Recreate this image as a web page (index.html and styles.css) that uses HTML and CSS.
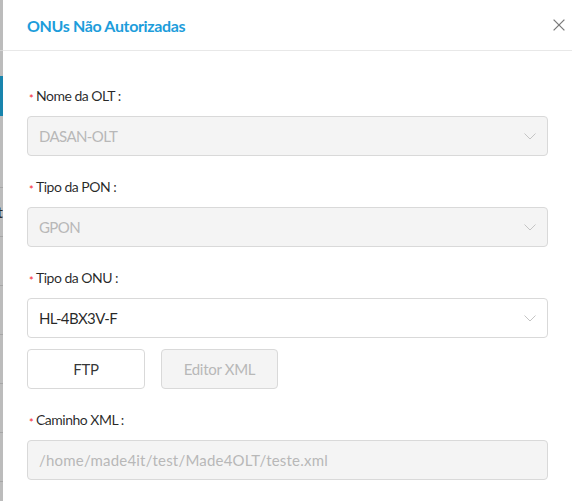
FILE: index.html
```html
<!DOCTYPE html>
<html lang="pt">
<head>
<meta charset="utf-8">
<title>ONUs Não Autorizadas</title>
<link rel="stylesheet" href="styles.css">
</head>
<body>
<div class="page">
  <div class="backdrop">
    <div class="bd-head"></div>
    <div class="bd-space"></div>
    <div class="bd-active"></div>
    <div class="bd-menu"></div>
    <div class="bd-row"><span>t</span></div>
    <div class="bd-row"></div>
    <div class="bd-row"></div>
    <div class="bd-row"></div>
    <div class="bd-row"></div>
    <div class="bd-row"></div>
    <div class="bd-row"></div>
  </div>
  <aside class="drawer">
    <header class="drawer-header">
      <h1 class="drawer-title">ONUs Não Autorizadas</h1>
      <button class="close" aria-label="Fechar">
        <svg width="12" height="12" viewBox="0 0 12 12"><path d="M0.6 0.6 L11.4 11.4 M11.4 0.6 L0.6 11.4" stroke="#7a7a7a" stroke-width="1.3" fill="none"/></svg>
      </button>
    </header>
    <div class="drawer-body">
      <div class="item">
        <label class="label"><span class="req">*</span>Nome da OLT :</label>
        <div class="select disabled"><span class="value">DASAN-OLT</span>
          <svg class="arrow" width="12" height="7" viewBox="0 0 12 7"><path d="M0.5 0.5 L6 6 L11.5 0.5" stroke="#c4c4c4" stroke-width="1" fill="none"/></svg>
        </div>
      </div>
      <div class="item">
        <label class="label"><span class="req">*</span>Tipo da PON :</label>
        <div class="select disabled"><span class="value">GPON</span>
          <svg class="arrow" width="12" height="7" viewBox="0 0 12 7"><path d="M0.5 0.5 L6 6 L11.5 0.5" stroke="#c4c4c4" stroke-width="1" fill="none"/></svg>
        </div>
      </div>
      <div class="item">
        <label class="label"><span class="req">*</span>Tipo da ONU :</label>
        <div class="select"><span class="value">HL-4BX3V-F</span>
          <svg class="arrow" width="12" height="7" viewBox="0 0 12 7"><path d="M0.5 0.5 L6 6 L11.5 0.5" stroke="#c4c4c4" stroke-width="1" fill="none"/></svg>
        </div>
      </div>
      <div class="item buttons">
        <button class="btn">FTP</button>
        <button class="btn disabled">Editor XML</button>
      </div>
      <div class="item">
        <label class="label"><span class="req">*</span>Caminho XML :</label>
        <div class="select disabled"><span class="value path">/home/made4it/test/Made4OLT/teste.xml</span></div>
      </div>
    </div>
  </aside>
</div>
</body>
</html>
```
FILE: styles.css
```css
* { box-sizing: border-box; }
body {
  margin: 0;
  font-family: Lato, "Noto Sans", sans-serif;
  color: rgba(0, 0, 0, 0.85);
  background: #fff;
}
.page {
  display: flex;
  height: 501px;
  overflow: hidden;
}
.backdrop {
  width: 3px;
  flex: none;
  background: #bcbcbc;
  display: flex;
  flex-direction: column;
}
.backdrop > div { flex: none; }
.bd-head { height: 51px; border-bottom: 1px solid #d2d2d2; }
.bd-space { height: 25px; }
.bd-active { height: 40px; background: #1884ad; }
.bd-menu { height: 71px; }
.bd-row {
  height: 49px;
  border-top: 1px solid #a6a6a6;
  display: flex;
  justify-content: flex-end;
  align-items: center;
  overflow: hidden;
  font-size: 15px;
  color: #2a2a2a;
  white-space: nowrap;
}
.bd-row:first-of-type { height: 47px; }
.drawer {
  flex: 1;
  background: #fff;
  display: flex;
  flex-direction: column;
}
.drawer-header {
  height: 51px;
  flex: none;
  border-bottom: 1px solid #e8e8e8;
  display: flex;
  align-items: center;
  justify-content: space-between;
  padding: 0 6px 0 24px;
}
.drawer-title {
  margin: 0;
  font-size: 16px;
  font-weight: 700;
  color: #1d9ddb;
  letter-spacing: -0.35px;
}
.close {
  border: 0;
  background: none;
  padding: 0;
  width: 12px;
  height: 12px;
  display: flex;
  margin-right: 1px;
}
.drawer-body {
  padding: 35px 24px 0 24px;
  display: flex;
  flex-direction: column;
}
.item {
  display: flex;
  flex-direction: column;
  margin-bottom: 21px;
}
.label {
  font-size: 14px;
  line-height: 20px;
  padding-bottom: 10px;
  color: rgba(0, 0, 0, 0.85);
  display: flex;
  align-items: center;
  letter-spacing: -0.5px;
}
.req {
  color: #f5222d;
  font-size: 11px;
  width: 9px;
  padding-left: 2px;
  line-height: 1;
  margin-top: 5px;
  letter-spacing: 0;
}
.select {
  height: 40px;
  border: 1px solid #d9d9d9;
  border-radius: 4px;
  background: #fff;
  display: flex;
  align-items: center;
  justify-content: space-between;
  padding: 0 11px 0 11px;
  font-size: 15px;
  color: rgba(0, 0, 0, 0.85);
}
.select.disabled {
  background: #f4f4f4;
  color: #b8b8b8;
}
.value { letter-spacing: -0.6px; }
.value.path { letter-spacing: 0.2px; }
.arrow { flex: none; margin-top: 1px; }
.buttons {
  flex-direction: row;
  gap: 16px;
  margin-top: -10px;
}
.btn {
  width: 118px;
  height: 40px;
  border: 1px solid #d9d9d9;
  border-radius: 4px;
  background: #fff;
  font-family: Lato, "Noto Sans", sans-serif;
  font-size: 15px;
  color: rgba(0, 0, 0, 0.8);
  padding: 0;
  letter-spacing: -0.3px;
}
.btn.disabled {
  width: 117px;
  background: #f4f4f4;
  color: #b8b8b8;
}
```
